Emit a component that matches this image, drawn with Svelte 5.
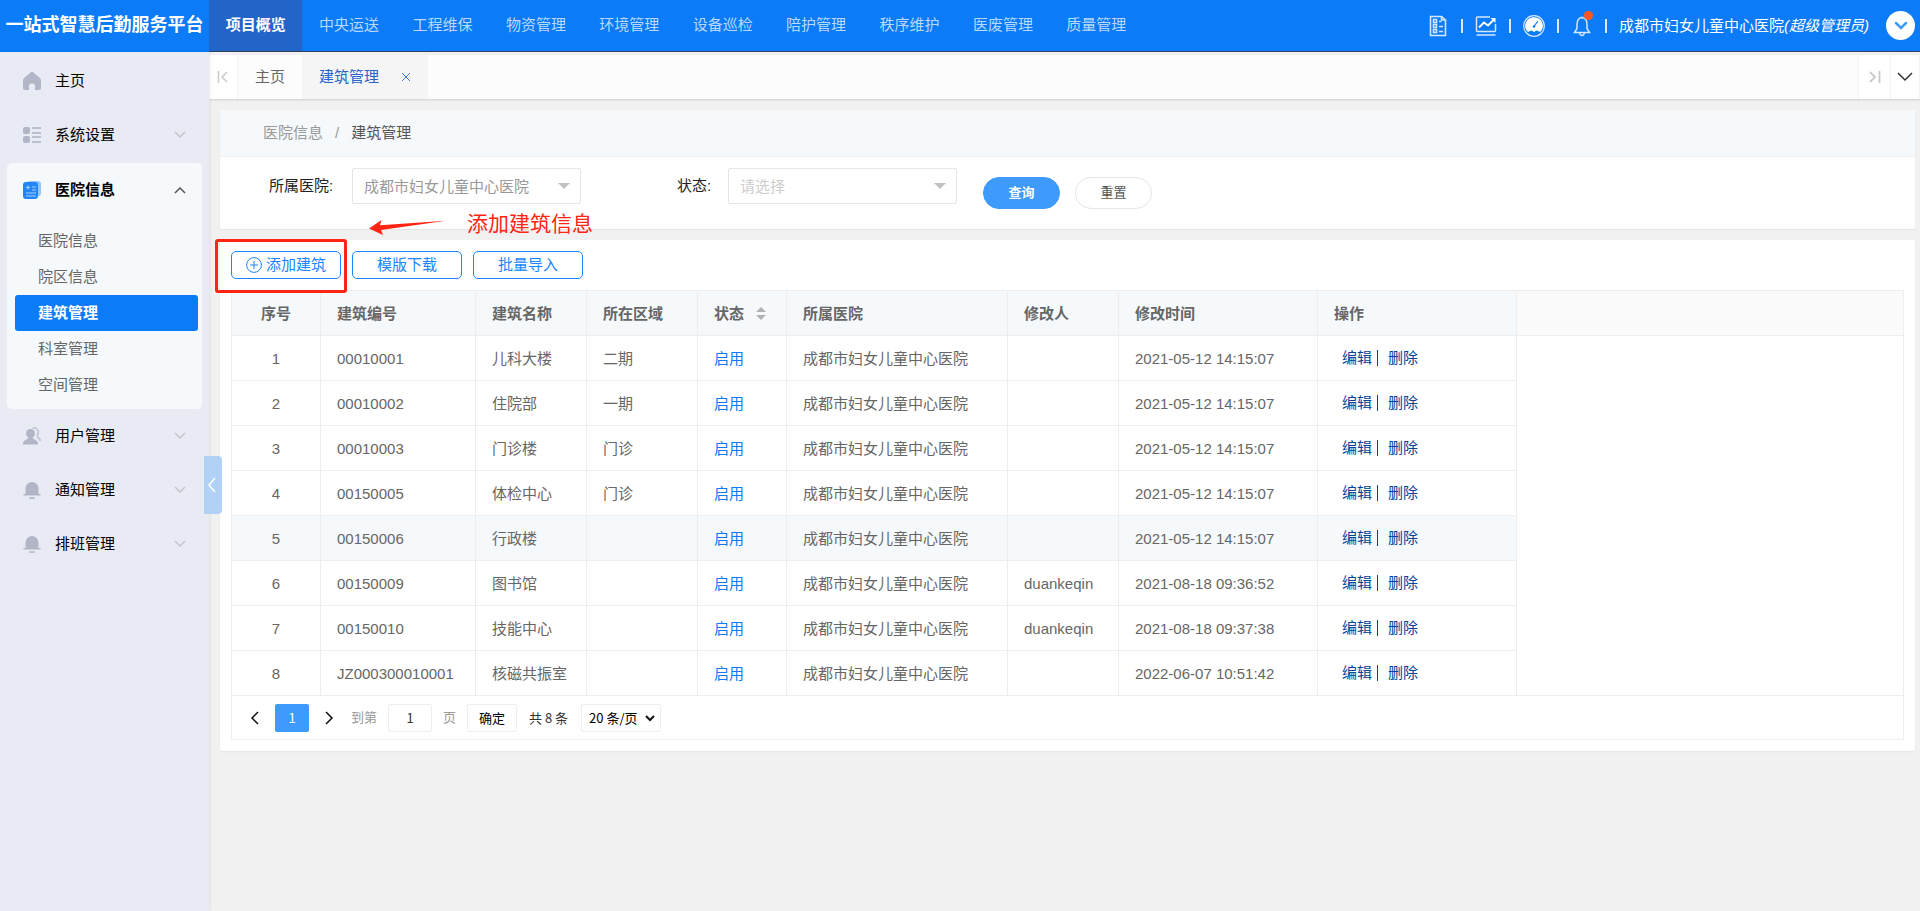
<script lang="ts">
  type MenuItem = { label: string; icon: string; children?: string[] };

  const navItems = ['项目概览', '中央运送', '工程维保', '物资管理', '环境管理', '设备巡检', '陪护管理', '秩序维护', '医废管理', '质量管理'];

  const menus: MenuItem[] = [
    { label: '主页', icon: 'home' },
    { label: '系统设置', icon: 'grid', children: [] },
    { label: '医院信息', icon: 'doc', children: ['医院信息', '院区信息', '建筑管理', '科室管理', '空间管理'] },
    { label: '用户管理', icon: 'user', children: [] },
    { label: '通知管理', icon: 'bell', children: [] },
    { label: '排班管理', icon: 'bell', children: [] },
  ];

  const hospital = '成都市妇女儿童中心医院';

  const rows = [
    { code: '00010001', name: '儿科大楼', area: '二期', editor: '', time: '2021-05-12 14:15:07' },
    { code: '00010002', name: '住院部', area: '一期', editor: '', time: '2021-05-12 14:15:07' },
    { code: '00010003', name: '门诊楼', area: '门诊', editor: '', time: '2021-05-12 14:15:07' },
    { code: '00150005', name: '体检中心', area: '门诊', editor: '', time: '2021-05-12 14:15:07' },
    { code: '00150006', name: '行政楼', area: '', editor: '', time: '2021-05-12 14:15:07' },
    { code: '00150009', name: '图书馆', area: '', editor: 'duankeqin', time: '2021-08-18 09:36:52' },
    { code: '00150010', name: '技能中心', area: '', editor: 'duankeqin', time: '2021-08-18 09:37:38' },
    { code: 'JZ000300010001', name: '核磁共振室', area: '', editor: '', time: '2022-06-07 10:51:42' },
  ];

  let activeNav = $state('项目概览');
  let openMenu = $state('医院信息');
  let activeSub = $state('建筑管理');
  let activeRow = $state(4);
  let pageNo = $state('1');
</script>

{#snippet menuIcon(name: string)}
  <svg class="menu-icon" viewBox="0 0 18 18" aria-hidden="true">
    {#if name === 'home'}
      <path d="M7.6 .6a2 2 0 0 1 2.8 0l6.4 5.4q1.2 1 1.2 2.400V16a2 2 0 0 1-2 2h-4v-4.500a2 2 0 0 0-2-2h-2a2 2 0 0 0-2 2V18H2a2 2 0 0 1-2-2V8.400Q0 7 1.200 6z" />
    {:else if name === 'grid'}
      <rect x="0" y="1" width="7" height="7" rx="2" />
      <rect x="0" y="10" width="7" height="7" rx="2" />
      <path d="M9 2h9M9 7h9M9 11h9M9 16h9" stroke="currentColor" stroke-width="2" opacity=".8" />
    {:else if name === 'doc'}
      <rect x="4" y="0" width="14" height="15" rx="3" opacity=".45" />
      <rect x="0" y="1" width="15" height="17" rx="3" />
      <path d="M3 6.500h4M5 4.500v4M9 6h4M9 9h4M3 12h10M3 15h10" stroke="#a5d0ff" stroke-width="1.200" />
    {:else if name === 'user'}
      <circle cx="7.500" cy="6.500" r="4.500" />
      <path d="M5.500 9.500h4l.5 2 4 2.500q1 .8 1 3.500H0q0-2.700 1-3.500l4-2.500z" />
      <path d="M9.500 1.500q3-1.500 4.800 1t.2 5.500q-.6 1.500 1.200 3 1.500 1.300 1.600 3" fill="none" stroke="currentColor" stroke-width="1.800" opacity=".7" />
    {:else}
      <path d="M2.500 13V7.500a6.500 6.500 0 0 1 13 0V13H17.500v1.500H.5V13z" />
      <rect x="6" y="16" width="6" height="2" rx="1" opacity=".8" />
    {/if}
  </svg>
{/snippet}

<div class="app">
  <header class="topbar">
    <h1 class="brand">一站式智慧后勤服务平台</h1>
    <nav class="topnav">
      {#each navItems as item}
        <a href="#top" class:active={item === activeNav} onclick={() => (activeNav = item)}>{item}</a>
      {/each}
    </nav>
    <div class="tools">
      <button class="tool" aria-label="单据">
        <svg width="18" height="22" viewBox="0 0 18 22" fill="none" stroke="#d3e7ff" stroke-width="1.600">
          <path d="M1.500 1.500h11l4 3.500v15.500h-15z" />
          <path d="M12.500 1.500V5h4" />
          <path d="M4.500 4.500h3v3h-3zM4.500 9.500h3v3h-3zM4.500 14.500h3v3h-3zM10 6.500h2.500M10 11.500h4M10 16.500h4" />
        </svg>
      </button>
      <span class="bar"></span>
      <button class="tool" aria-label="统计">
        <svg width="22" height="22" viewBox="0 0 22 22" fill="none" stroke="#d3e7ff" stroke-width="1.500">
          <path d="M15 2H2.500Q1.500 2 1.500 3v12.500q0 1 1 1h17q1 0 1-1V9M1.500 20h19" />
          <path d="M4 12.500l5-5 4 3 6-6" stroke="#fff" stroke-width="1.800" />
          <path d="M15.500 3h5v5z" fill="#fff" stroke="none" />
        </svg>
      </button>
      <span class="bar"></span>
      <button class="tool" aria-label="仪表盘">
        <svg width="22" height="22" viewBox="0 0 22 22">
          <circle cx="11" cy="11" r="10.300" fill="none" stroke="#d3e7ff" stroke-width="1.200" />
          <path d="M11 2.200a8.700 8.700 0 0 1 7.300 13.600q-1.300 1.500-3 .4-1.800-1.200-3 0-1.300 1-2.600 0-1.200-1.200-3 0-1.700 1.100-3-.4A8.700 8.700 0 0 1 11 2.200z" fill="#fff" />
          <path d="M14.500 6.500l-3.200 4.500" stroke="#0b7bf7" stroke-width="1.200" stroke-linecap="round" />
          <circle cx="11" cy="11.500" r="1.300" fill="#0b7bf7" />
        </svg>
      </button>
      <span class="bar"></span>
      <button class="tool" aria-label="消息">
        <svg width="18" height="22" viewBox="0 0 18 22" fill="none" stroke="#d3e7ff" stroke-width="1.500">
          <path d="M7.500 2.500h3M9 2.500q5 .5 5 7v4l2.500 4h-15l2.500-4v-4q0-6.500 5-7zM6.500 17.500q.5 3 2.500 3t2.500-3" />
        </svg>
        <i class="dot"></i>
      </button>
      <span class="bar"></span>
      <span class="account">{hospital}<em>(超级管理员)</em></span>
      <button class="avatar" aria-label="账户菜单">
        <svg width="14" height="10" viewBox="0 0 14 10" fill="none" stroke="#3e9bfb" stroke-width="2.500" stroke-linecap="round"><path d="M2 2l5 5 5-5" /></svg>
      </button>
    </div>
  </header>

  <div class="body">
    <aside class="sidebar">
      <ul class="menu">
        {#each menus as menu}
          {@const open = menu.label === openMenu}
          <li class="group" class:open>
            <button class="menu-head" onclick={() => (openMenu = menu.label)}>
              {@render menuIcon(menu.icon)}
              <span>{menu.label}</span>
              {#if menu.children}
                <svg class="arrow" viewBox="0 0 12 8"><path d={open ? 'M1 7l5-5 5 5' : 'M1 1l5 5 5-5'} /></svg>
              {/if}
            </button>
            {#if open && menu.children?.length}
              <ul class="submenu">
                {#each menu.children as sub}
                  <li><a href="#top" class:active={sub === activeSub} onclick={() => (activeSub = sub)}>{sub}</a></li>
                {/each}
              </ul>
            {/if}
          </li>
        {/each}
      </ul>
      <button class="collapse" aria-label="收起菜单">
        <svg width="8" height="16" viewBox="0 0 8 16" fill="none" stroke="#fff" stroke-width="1.500"><path d="M7 1L1 8l6 7" /></svg>
      </button>
    </aside>

    <main>
      <div class="tabs">
        <button class="tab-ctl" aria-label="向左">
          <svg width="12" height="12" viewBox="0 0 12 12" fill="none" stroke="#c9c9c9" stroke-width="1.500"><path d="M1.500 0v12M10 1L5 6l5 5" /></svg>
        </button>
        <button class="tab">主页</button>
        <button class="tab current">
          建筑管理
          <svg width="10" height="10" viewBox="0 0 10 10" fill="none" stroke="#3f77d6"><path d="M1 1l8 8M9 1L1 9" /></svg>
        </button>
        <span class="spacer"></span>
        <button class="tab-ctl wide" aria-label="向右">
          <svg width="12" height="12" viewBox="0 0 12 12" fill="none" stroke="#c9c9c9" stroke-width="1.800"><path d="M10.500 0v12M1 1l5 5-5 5" /></svg>
        </button>
        <button class="tab-ctl" aria-label="更多">
          <svg width="16" height="10" viewBox="0 0 16 10" fill="none" stroke="#333" stroke-width="1.500"><path d="M1 1l7 7 7-7" /></svg>
        </button>
      </div>

      <section class="card">
        <div class="crumbs"><a href="#top">医院信息</a><span>/</span><b>建筑管理</b></div>
        <form class="filters" onsubmit={(e) => e.preventDefault()}>
          <label for="hospital">所属医院:</label>
          <div class="picker">
            <select id="hospital"><option>{hospital}</option></select>
          </div>
          <label class="second" for="status">状态:</label>
          <div class="picker empty">
            <select id="status"><option>请选择</option></select>
          </div>
          <div class="form-btns">
            <button class="primary" type="submit">查询</button>
            <button type="reset">重置</button>
          </div>
        </form>
      </section>

      <section class="card list">
        <div class="actions">
          <button>
            <svg width="16" height="16" viewBox="0 0 16 16" fill="none" stroke="currentColor"><circle cx="8" cy="8" r="7.400" /><path d="M8 4v8M4 8h8" /></svg>
            添加建筑
          </button>
          <button>模版下载</button>
          <button>批量导入</button>
          <div class="note-box"></div>
          <div class="note">
            <svg width="77" height="16" viewBox="0 0 77 16"><path d="M0 8.500L12.500 0l-1.500 5.200L77 .8 12 10l2 5z" fill="#ff2414" /></svg>
            <span>添加建筑信息</span>
          </div>
        </div>

        <div class="grid">
          <div class="table-wrap">
            <table>
              <colgroup>
                <col class="w-no" /><col class="w-code" /><col class="w-sm" /><col class="w-sm" /><col class="w-no" />
                <col class="w-hosp" /><col class="w-sm" /><col class="w-lg" /><col class="w-lg" />
              </colgroup>
              <thead>
                <tr>
                  <th class="center">序号</th>
                  <th>建筑编号</th>
                  <th>建筑名称</th>
                  <th>所在区域</th>
                  <th>状态<svg class="sort" width="10" height="13" viewBox="0 0 10 13" fill="#b2b2b2"><path d="M0 5l5-5 5 5zM0 8h10l-5 5z" /></svg></th>
                  <th>所属医院</th>
                  <th>修改人</th>
                  <th>修改时间</th>
                  <th>操作</th>
                </tr>
              </thead>
              <tbody>
                {#each rows as row, i}
                  <tr class:hover={i === activeRow} onmouseenter={() => (activeRow = i)}>
                    <td class="center">{i + 1}</td>
                    <td>{row.code}</td>
                    <td>{row.name}</td>
                    <td>{row.area}</td>
                    <td class="on">启用</td>
                    <td>{hospital}</td>
                    <td>{row.editor}</td>
                    <td>{row.time}</td>
                    <td><div class="ops"><a href="#top">编辑</a><i></i><a href="#top">删除</a></div></td>
                  </tr>
                {/each}
              </tbody>
            </table>
          </div>
          <div class="pager">
            <button class="step" aria-label="上一页"><svg width="9" height="14" viewBox="0 0 9 14"><path d="M8 1L2 7l6 6" /></svg></button>
            <button class="page">1</button>
            <button class="step" aria-label="下一页"><svg width="9" height="14" viewBox="0 0 9 14"><path d="M1 1l6 6-6 6" /></svg></button>
            <label class="jump">到第 <input bind:value={pageNo} /> 页</label>
            <button class="ok">确定</button>
            <span class="total">共 8 条</span>
            <div class="size">
              <select aria-label="每页条数"><option>20 条/页</option></select>
              <svg width="10" height="7" viewBox="0 0 10 7"><path d="M1 1l4 4 4-4" /></svg>
            </div>
          </div>
        </div>
      </section>
    </main>
  </div>
</div>

<style>
  :global(body) {
    margin: 0;
    background: #f1f1f1;
  }

  .app {
    display: flex;
    flex-direction: column;
    min-height: 100vh;
    font: 15px/24px 'Liberation Sans', 'Noto Sans CJK SC', sans-serif;
    color: #666;
  }

  .app * {
    box-sizing: border-box;
  }

  button,
  input,
  select {
    font: inherit;
    color: inherit;
    margin: 0;
    padding: 0;
    border: 0;
    background: none;
  }

  button {
    cursor: pointer;
  }

  a {
    color: inherit;
    text-decoration: none;
  }

  ul {
    list-style: none;
    margin: 0;
    padding: 0;
  }

  svg {
    flex: none;
    display: block;
  }

  /* top bar */
  .topbar {
    display: flex;
    height: 52px;
    background: #0b7bf7;
    color: #fff;
  }

  .brand {
    width: 209px;
    margin: 0;
    flex: none;
    font-size: 18px;
    line-height: 50px;
    text-align: center;
    white-space: nowrap;
    box-shadow: 0 1px 2px rgba(0, 0, 0, 0.15);
  }

  .topnav {
    display: grid;
    grid-template-columns: repeat(10, 1fr);
    flex: 0 1 934px;
    border-bottom: 1px solid #33425c;
  }

  .topnav a {
    line-height: 49px;
    text-align: center;
    color: #b8d9fd;
    white-space: nowrap;
  }

  .topnav a.active {
    background: #2364c8;
    color: #fff;
    font-weight: bold;
  }

  .tools {
    display: flex;
    flex: 1;
    align-items: center;
    justify-content: flex-end;
    padding-right: 5px;
    border-bottom: 1px solid #33425c;
  }

  .tool {
    position: relative;
    display: flex;
    justify-content: center;
    width: 22px;
  }

  .bar {
    width: 2px;
    height: 14px;
    margin: 0 12px;
    background: #d3e7ff;
  }

  .dot {
    position: absolute;
    top: -4px;
    right: 0;
    width: 9px;
    height: 9px;
    border-radius: 50%;
    background: #ff5722;
  }

  .account {
    min-width: 256px;
    white-space: nowrap;
  }

  .avatar {
    display: flex;
    align-items: center;
    justify-content: center;
    width: 29px;
    height: 29px;
    margin-left: 11px;
    border-radius: 50%;
    background: #fff;
  }

  /* side menu */
  .body {
    display: flex;
    flex: 1;
  }

  .sidebar {
    position: relative;
    flex: none;
    width: 209px;
    padding: 2px 7px 0;
    background: #e8ebf4;
    box-shadow: 1px 0 3px rgba(0, 0, 0, 0.08);
  }

  .menu-head {
    display: flex;
    align-items: center;
    width: 100%;
    height: 54px;
    padding: 0 16px;
    color: #000;
    text-align: left;
  }

  .menu-head span {
    flex: 1;
  }

  .menu-icon {
    width: 18px;
    height: 18px;
    margin-right: 14px;
    fill: currentColor;
    color: #b1b5c6;
  }

  .arrow {
    width: 12px;
    height: 8px;
    fill: none;
    stroke: #c3c5cc;
    stroke-width: 1.5;
  }

  .open {
    margin-top: 1px;
    padding-bottom: 6px;
    border-radius: 5px;
    background: #f5f9fc;
  }

  .open .menu-head span {
    font-weight: bold;
  }

  .open .menu-icon {
    color: #2286f7;
  }

  .open .arrow {
    stroke: #555;
  }

  .submenu {
    padding: 6px 4px 0 8px;
  }

  .submenu a {
    display: block;
    padding-left: 23px;
    border-radius: 3px;
    line-height: 36px;
  }

  .submenu .active {
    background: #0b7bf7;
    color: #fff;
    font-weight: bold;
  }

  .collapse {
    position: absolute;
    top: 404px;
    right: -13px;
    display: flex;
    align-items: center;
    padding-left: 4px;
    width: 18px;
    height: 58px;
    border-radius: 0 4px 4px 0;
    background: #b1d2f5;
  }

  main {
    flex: 1;
    min-width: 0;
  }

  .tabs {
    display: flex;
    height: 44px;
    margin-top: 3px;
    background: #fcfcfc;
    box-shadow: 0 1px 2px rgba(0, 0, 0, 0.15);
  }

  .tab-ctl {
    display: flex;
    align-items: center;
    justify-content: center;
    width: 29px;
    background: #fff;
    border-right: 1px solid #f2f2f2;
  }

  .wide {
    width: 33px;
    border-left: 1px solid #f2f2f2;
  }

  .tab {
    display: flex;
    align-items: center;
    gap: 22px;
    padding: 0 17px;
    line-height: 42px;
  }

  .current {
    background: #f5f5f5;
    color: #2a62c9;
  }

  .spacer {
    flex: 1;
  }

  /* filter card */
  .card {
    margin: 11px 5px 0 11px;
    border-radius: 2px;
    background: #fff;
    box-shadow: 0 1px 2px rgba(0, 0, 0, 0.06);
  }

  .crumbs {
    display: flex;
    gap: 12px;
    height: 47px;
    padding-left: 43px;
    line-height: 45px;
    background: #f5f9fc;
    border-bottom: 1px solid #f1f1f1;
    color: #999;
  }

  .crumbs b {
    font-weight: normal;
    color: #555;
  }

  .filters {
    display: flex;
    align-items: flex-start;
    padding: 11px 0 20px 49px;
    line-height: 36px;
    color: #222;
  }

  .filters label {
    width: 83px;
  }

  .filters .second {
    width: 51px;
    margin-left: 96px;
  }

  .picker {
    position: relative;
    width: 229px;
  }

  .picker::after {
    content: '';
    position: absolute;
    top: 15px;
    right: 11px;
    border: 6px solid transparent;
    border-top-color: #c2c2c2;
    pointer-events: none;
  }

  .picker select {
    appearance: none;
    display: block;
    width: 100%;
    height: 36px;
    padding-left: 11px;
    border: 1px solid #e6e6e6;
    border-radius: 2px;
    color: #999;
  }

  .empty select {
    color: #ccc;
  }

  .form-btns {
    display: flex;
    gap: 15px;
    margin: 9px 0 0 26px;
  }

  .form-btns button {
    width: 77px;
    height: 32px;
    border: 1px solid #e6e6e6;
    border-radius: 16px;
    font-size: 13px;
    line-height: 30px;
    color: #555;
  }

  .form-btns .primary {
    border-color: #3e9bfb;
    background: #3e9bfb;
    color: #fff;
    font-weight: bold;
  }

  /* list card */
  .list {
    padding: 11px;
  }

  .actions {
    position: relative;
    display: flex;
    gap: 11px;
    margin-bottom: 11px;
  }

  .actions button {
    display: flex;
    align-items: center;
    justify-content: center;
    gap: 4px;
    width: 110px;
    height: 28px;
    border: 1px solid #1a85ff;
    border-radius: 5px;
    color: #1a85ff;
  }

  .note-box {
    position: absolute;
    top: -12px;
    left: -16px;
    width: 132px;
    height: 54px;
    border: 3px solid #ff2414;
    border-radius: 3px;
  }

  .note {
    position: absolute;
    top: -42px;
    left: 138px;
    display: flex;
    gap: 21px;
    color: #ff2414;
    font-size: 21px;
    line-height: 30px;
  }

  .note svg {
    margin-top: 11px;
  }

  .grid {
    border: 1px solid #eee;
  }

  .table-wrap {
    background: linear-gradient(#fafafa 44px, #eee 44px, #eee 45px, #fff 45px);
    border-bottom: 1px solid #eee;
  }

  table {
    width: 1285px;
    table-layout: fixed;
    border-collapse: separate;
    border-spacing: 0;
    background: #fff;
  }

  tbody tr:last-child td {
    height: 44px;
    border-bottom: 0;
  }

  .w-no { width: 89px; }
  .w-code { width: 155px; }
  .w-sm { width: 111px; }
  .w-hosp { width: 221px; }
  .w-lg { width: 199px; }

  th,
  td {
    height: 45px;
    padding: 2px 0 0 16px;
    border-right: 1px solid #eee;
    border-bottom: 1px solid #eee;
    text-align: left;
    white-space: nowrap;
  }

  th {
    background: #f5f9fc;
  }

  .center {
    padding-left: 0;
    text-align: center;
  }

  .hover td {
    background: #f5f9fc;
  }

  .on {
    color: #0b7bf7;
  }

  .sort {
    display: inline-block;
    margin-left: 12px;
    vertical-align: -1px;
  }

  .ops {
    display: flex;
    align-items: center;
    padding: 0 0 2px 8px;
    color: #01439a;
  }

  .ops i {
    width: 1px;
    height: 16px;
    margin: 0 10px 0 5px;
    background: #01439a;
  }

  .pager {
    display: flex;
    align-items: center;
    height: 43px;
    padding-left: 14px;
    font: 13px/26px 'Noto Sans CJK SC', sans-serif;
    color: #333;
  }

  .step {
    display: flex;
    justify-content: center;
    width: 17px;
  }

  .pager svg {
    fill: none;
    stroke: #111;
    stroke-width: 1.5;
  }

  .page {
    width: 34px;
    height: 28px;
    margin: 0 12px;
    border-radius: 2px;
    background: #3e9bfb;
    color: #fff;
  }

  .jump {
    display: flex;
    gap: 11px;
    margin-left: 13px;
    color: #999;
  }

  .jump input {
    width: 44px;
    height: 28px;
    border: 1px solid #eee;
    border-radius: 2px;
    text-align: center;
    color: #333;
  }

  .ok {
    width: 50px;
    height: 28px;
    margin: 0 12px 0 11px;
    border: 1px solid #eee;
    border-radius: 2px;
    color: #000;
  }

  .size {
    position: relative;
    margin-left: 13px;
  }

  .size select {
    appearance: none;
    display: block;
    width: 80px;
    height: 28px;
    padding-left: 7px;
    border: 1px solid #eee;
    border-radius: 2px;
    color: #000;
  }

  .size svg {
    position: absolute;
    top: 11px;
    right: 6px;
    stroke-width: 2;
    pointer-events: none;
  }
</style>
